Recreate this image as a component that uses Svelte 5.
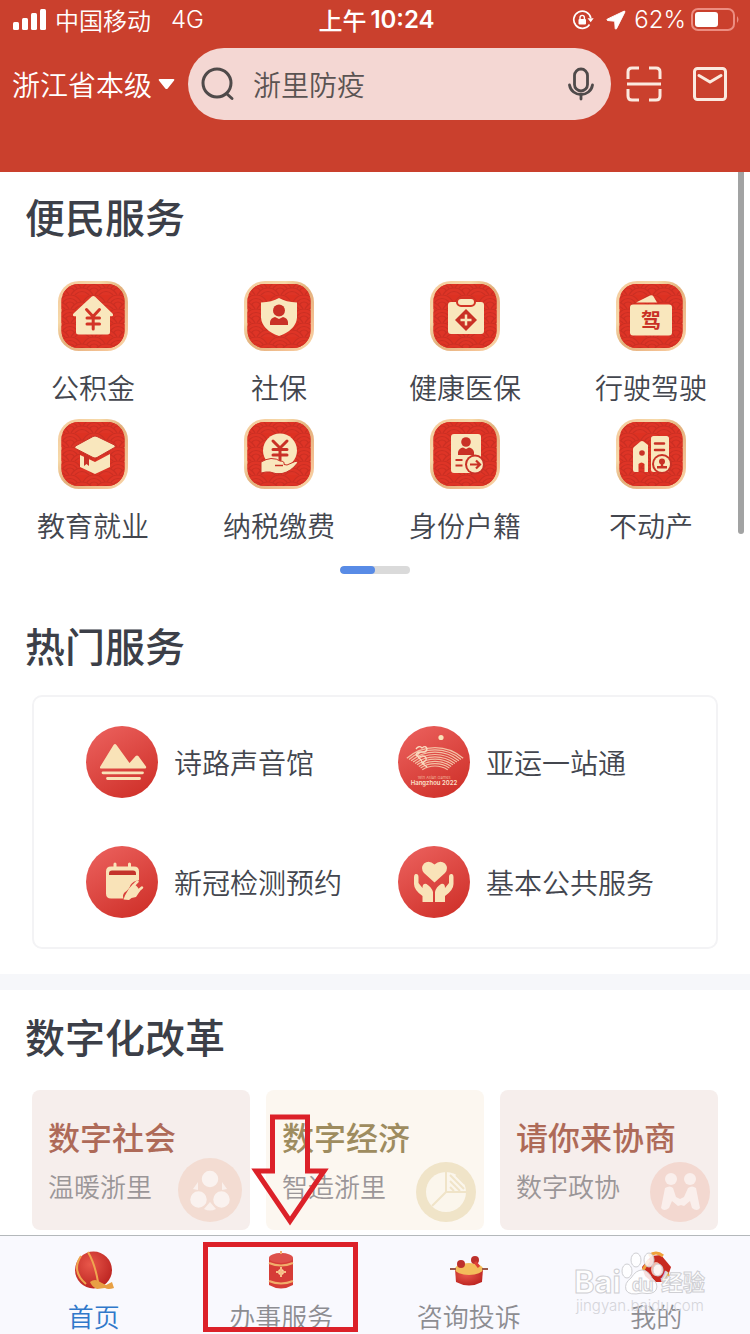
<script>
  const services = [
    { id: 'fund', label: '公积金' },
    { id: 'social', label: '社保' },
    { id: 'health', label: '健康医保' },
    { id: 'drive', label: '行驶驾驶' },
    { id: 'edu', label: '教育就业' },
    { id: 'tax', label: '纳税缴费' },
    { id: 'identity', label: '身份户籍' },
    { id: 'estate', label: '不动产' }
  ];

  const hot = [
    { id: 'poem', label: '诗路声音馆' },
    { id: 'games', label: '亚运一站通' },
    { id: 'test', label: '新冠检测预约' },
    { id: 'public', label: '基本公共服务' }
  ];

  const reforms = [
    { id: 'society', title: '数字社会', note: '温暖浙里' },
    { id: 'economy', title: '数字经济', note: '智造浙里' },
    { id: 'consult', title: '请你来协商', note: '数字政协' }
  ];

  const tabs = [
    { id: 'home', label: '首页' },
    { id: 'affairs', label: '办事服务' },
    { id: 'ask', label: '咨询投诉' },
    { id: 'mine', label: '我的' }
  ];

  let active = $state('home');
  let keyword = $state('浙里防疫');

  // Concentric arcs of the fan emblem, from the inner radius outwards.
  const fan = Array.from({ length: 9 }, (_, i) => {
    const r = 24 + i * 2.3;
    const a = ((32 + i * 1.2) * Math.PI) / 180;
    const dx = r * Math.sin(a);
    const y = 64 - r * Math.cos(a);
    return `M${37 - dx} ${y}A${r} ${r} 0 0 1 ${37 + dx} ${y}`;
  });
</script>

<svg class="defs" width="0" height="0" aria-hidden="true">
  <defs>
    <linearGradient id="gold" x1="0" y1="0" x2="1" y2="1">
      <stop offset="0" stop-color="#f3c79a" />
      <stop offset="0.3" stop-color="#f6d9a8" />
      <stop offset="0.5" stop-color="#e2b07c" />
      <stop offset="0.8" stop-color="#f4c193" />
      <stop offset="1" stop-color="#f8dcae" />
    </linearGradient>
    <linearGradient id="disc" x1="0.2" y1="0" x2="0.8" y2="1">
      <stop offset="0" stop-color="#ea5f5b" />
      <stop offset="1" stop-color="#cf3029" />
    </linearGradient>
    <radialGradient id="ball" cx="0.4" cy="0.35" r="0.7">
      <stop offset="0" stop-color="#e8574a" />
      <stop offset="1" stop-color="#bb2320" />
    </radialGradient>
    <pattern id="wave" width="24" height="14" patternUnits="userSpaceOnUse">
      <g fill="#de3426" stroke="#cb2e22" stroke-width="1.200">
        <circle cx="12" cy="12" r="12" /><circle cx="12" cy="12" r="8.500" /><circle cx="12" cy="12" r="5" />
        <circle cx="0" cy="19" r="12" /><circle cx="0" cy="19" r="8.500" />
        <circle cx="24" cy="19" r="12" /><circle cx="24" cy="19" r="8.500" />
      </g>
    </pattern>
  </defs>
</svg>

<div class="app">
  <header>
    <div class="status">
      <div class="carrier">
        <svg width="34" height="22" viewBox="0 0 34 22" fill="#fff" aria-hidden="true">
          <rect x="0" y="13" width="6" height="8" rx="1.5" /><rect x="9" y="9" width="6" height="12" rx="1.5" />
          <rect x="18" y="4" width="6" height="17" rx="1.5" /><rect x="27" y="0" width="6" height="21" rx="1.5" />
        </svg>
        <span>中国移动</span><span class="net">4G</span>
      </div>
      <div class="time"><span>上午</span><b>10:24</b></div>
      <div class="power">
        <svg width="22" height="20" viewBox="0 0 22 20" fill="none" stroke="#fff" stroke-width="1.7" aria-hidden="true">
          <path d="M17.5 14.5A8.6 8.6 0 1 1 18.8 8" />
          <path d="M15.5 8.2h6.2l-3 4z" fill="#fff" stroke="none" />
          <rect x="6.5" y="9" width="7.5" height="5.5" rx="1" fill="#fff" stroke="none" />
          <path d="M8 9.5V7.6a2.2 2.2 0 0 1 4.4 0v1.9" stroke-width="1.4" />
        </svg>
        <svg class="locate" width="20" height="20" viewBox="0 0 20 20" fill="#fff" aria-hidden="true">
          <path d="M18 1.200 1.200 9.200q-.8.8.3 1.300l7.200.7.500 7.300q.5 1.200 1.300.2L18.900 2q.2-1.200-.9-.8z" stroke="#fff" />
        </svg>
        <span>62%</span>
        <svg width="50" height="24" viewBox="0 0 50 24" fill="none" aria-hidden="true">
          <rect x="2" y="1" width="42" height="21" rx="6" stroke="#ec8d81" stroke-width="2" />
          <rect x="5" y="4" width="23" height="15" rx="3" fill="#fff" />
          <path d="M47 8q3 3.500 0 7z" fill="#ec8d81" />
        </svg>
      </div>
    </div>
    <div class="bar">
      <button class="region">
        浙江省本级
        <svg width="18" height="12" viewBox="0 0 18 12" aria-hidden="true"><path d="M1.500 1h14q1.500.2.6 1.500l-6.400 8q-1.200 1-2.400 0l-6.400-8q-.8-1.300.6-1.500z" fill="#fff" /></svg>
      </button>
      <div class="search">
        <svg width="34" height="34" viewBox="0 0 34 34" fill="none" stroke="#4f4a4a" stroke-width="3" stroke-linecap="round" aria-hidden="true">
          <circle cx="16" cy="16" r="14" /><path d="m26 27 5 4.500" />
        </svg>
        <input type="text" aria-label="搜索" bind:value={keyword} />
        <button class="icon" aria-label="语音">
          <svg width="28" height="34" viewBox="0 0 28 34" fill="none" stroke="#4f4a4a" stroke-width="2.800" stroke-linecap="round">
            <rect x="7.500" y="2" width="13" height="22" rx="6.500" /><path d="M2.500 18c1 6 6 9.500 11.500 9.500S24.500 24 25.500 18M14 28v4" />
          </svg>
        </button>
      </div>
      <button class="icon" aria-label="扫一扫">
        <svg width="36" height="36" viewBox="0 0 36 36" fill="none" stroke="#fbe9df" stroke-width="3">
          <path d="M2 13V6q0-4 4-4h7M23 2h7q4 0 4 4v7M2 23v7q0 4 4 4h7M23 34h7q4 0 4-4v-7M1 18h34" />
        </svg>
      </button>
      <button class="icon" aria-label="消息">
        <svg width="36" height="36" viewBox="0 0 36 36" fill="none" stroke="#fbe9df" stroke-width="3">
          <rect x="2.500" y="2.500" width="31" height="31" rx="3" /><path d="m7 9.500 11 6.500 11-6.500" stroke-linecap="round" />
        </svg>
      </button>
    </div>
  </header>

  <main>
    <section class="convenience">
      <h2>便民服务</h2>
      <div class="grid">
        {#each services as s}
          <button class="service">
            <svg width="70" height="70" viewBox="0 0 70 70" fill="#f9e7bd" aria-hidden="true">
              <rect x="0" y="0" width="70" height="70" rx="21" fill="url(#gold)" />
              <rect x="3.500" y="3" width="63" height="64" rx="17" fill="#dd3122" />
              <rect x="3.500" y="3" width="63" height="64" rx="17" fill="url(#wave)" />
              {#if s.id === 'fund'}
                <path d="M33.500 15.800q1.800-1.500 3.600 0L54.500 32.500q1.500 2.500-.8 2.700H52V51q0 2.500-2.500 2.500h-29Q18 53.500 18 51V35.200h-1.700q-2.300-.2-.8-2.700z" />
                <path d="m28.500 28.500 6.500 7 6.500-7M29 37h12.500M29 43h12.500M35.200 36v12" fill="none" stroke="#d33426" stroke-width="3" stroke-linecap="round" />
              {:else if s.id === 'social'}
                <path d="M35 17q7 4 18 4.500v15Q52 49 35 55 18 49 17 36.500v-15Q28 21 35 17z" />
                <g fill="#c93126"><circle cx="35" cy="29.500" r="6" /><path d="M26 44v-3q.5-4 5-5l4 2 4-2q4.500 1 5 5v3z" /></g>
              {:else if s.id === 'health'}
                <rect x="18" y="21" width="36" height="32" rx="3" />
                <rect x="27" y="17" width="18" height="8" rx="4" stroke="#d33426" stroke-width="2" />
                <path d="m36 28 11 11-11 11-11-11z" fill="#c93126" /><path d="M36 33.500v11M30.500 39h11" stroke="#f9e7bd" stroke-width="2.500" />
              {:else if s.id === 'drive'}
                <path d="M20 21.500 34 14.500q2.500-.8 3.500 1l3.500 6z" />
                <rect x="14" y="23.500" width="42" height="31" rx="3" />
                <text x="35" y="46.500" class="glyph">驾</text>
              {:else if s.id === 'edu'}
                <path d="M22 36v12l15 7 15-7V35l-15 8z" />
                <path d="M17.500 29.500q-1.500-1.300 0-2.500l17.500-9.500q2-1 4 0l17.500 8.500q1.500 1.200 0 2.500L39 38.500q-2 1-4 0z" stroke="#c93126" stroke-width="1" />
                <path d="M26 36v11l2.500-2 2.500 2v-9z" fill="#c93126" />
              {:else if s.id === 'tax'}
                <circle cx="36" cy="31.500" r="17" />
                <path d="m29 22 7 7 7-7M29 30.500h14M29 36h14M36 29v12" fill="none" stroke="#c93126" stroke-width="3" stroke-linecap="round" />
                <path d="M17 43q5-3 10-3.500 6 0 9 2.500 5 0 4 3.500l3 .5 8-3.500q3.500-.5 2 2-6 8-15 10-6 1-12-1.500-4-.5-9 1z" stroke="#c93126" stroke-width="1" />
                <path d="M31 46.500h8" stroke="#c93126" stroke-width="1.500" />
              {:else if s.id === 'identity'}
                <rect x="21" y="15" width="30" height="39" rx="3" />
                <g fill="#c93126"><circle cx="36" cy="23" r="4.800" /><path d="M28 36v-3q1-4 5-4.500l3 1.500 3-1.500q4 .5 5 4.500v3z" /><circle cx="45" cy="45.500" r="10" /></g>
                <circle cx="45" cy="45.500" r="8" />
                <path d="M25.500 41h7M25.500 46.500h7M40 45.500h9M46 41.500l4 4-4 4" fill="none" stroke="#c93126" stroke-width="2.200" />
              {:else}
                <path d="M17 30q0-1 1-2l6.500-5.500q1.500-1 3 0L32 26v27h-3.500V45q-3-3-6 0v8H19q-2 0-2-2z" />
                <circle cx="26" cy="34" r="2.800" fill="#c93126" />
                <rect x="35" y="17" width="18" height="36" rx="2.500" />
                <path d="M39 24.500h9M39 31h9" stroke="#c93126" stroke-width="2.500" stroke-linecap="round" />
                <circle cx="46" cy="45" r="10" fill="#c93126" /><circle cx="46" cy="45" r="8" />
                <g fill="#c93126"><circle cx="46" cy="42.500" r="3" /><path d="M44.800 44h2.400v3H51v2.500H41V47h3.800z" /></g>
              {/if}
            </svg>
            <span>{s.label}</span>
          </button>
        {/each}
      </div>
      <div class="pager"><span></span></div>
      <span class="thumb"></span>
    </section>

    <section class="popular">
      <h2>热门服务</h2>
      <div class="panel">
        {#each hot as h}
          <button class="entry">
            <svg width="72" height="72" viewBox="0 0 72 72" fill="#f9e3b8" aria-hidden="true">
              <circle cx="36" cy="36" r="36" fill="url(#disc)" />
              {#if h.id === 'poem'}
                <path d="M14.500 42.500q-1-.8-.2-2L27.500 19q1.500-2 3 0L43.500 37l6.200-7q1.300-1.200 2.600 0L60 40.500q.7 1.300-.7 2z" />
                <path d="M17 46.800h39.500M21.500 52.500h32" stroke="#f9e3b8" stroke-width="2.800" stroke-linecap="round" />
              {:else if h.id === 'games'}
                <circle cx="43" cy="11.500" r="2.600" />
                <g fill="none" stroke="#f4c0a4" stroke-width="1.200">{#each fan as d}<path {d} />{/each}</g>
                <path d="M18 23q3-4 6-1 4-3 5 1-1 4-5 3-5-1-6 3 2 3 6 1 5 0 4 4l-4 4M22 26q-4 3-1 6 3 2 3 5l5 4" fill="none" stroke="#f9dcc0" stroke-width="1.300" />
                <text x="36" y="53" class="tiny">19th Asian Games</text>
                <text x="36" y="59" class="city">Hangzhou 2022</text>
              {:else if h.id === 'test'}
                <path d="M25 20.500h23q5 0 5 5V34q-6 1-8.500 5-1.500 5-6 7.500-2.500 3-1 6H25q-5 0-5-5v-22q0-5 5-5z" />
                <path d="M29 18v4M43.500 18v4" stroke="#f9e3b8" stroke-width="3" stroke-linecap="round" />
                <path d="M23 29v-1.500q0-3 3-3h21q3 0 3 3V29z" fill="#c4332b" />
                <path d="m43 42.500 4-4.500q4 1 7 7l-4 6-4.500 1-2.500 2-5.500-.5 1.500-4z" />
                <path d="m48 39 3.500-3.500M52 45l4-3.500" stroke="#f9e3b8" stroke-width="2.500" stroke-linecap="round" />
              {:else}
                <path d="M36.500 36.500 26 27q-4-5 0-9.500 5-4 10.500 1 5.500-5 10.500-1 4 4.500 0 9.500z" />
                <path d="M17.500 28q3-.5 3 3v6l4 5q0-5 4-4 5 3 6.500 8V56H24.500v-6Q16 44 16 38v-7q0-2.500 1.500-3z" />
                <path d="M54 28q-3-.5-3 3v6l-4 5q0-5-4-4-5 3-6 8V56h10v-6q8.500-6 8.500-12v-7q0-2.500-1.500-3z" />
              {/if}
            </svg>
            <span>{h.label}</span>
          </button>
        {/each}
      </div>
    </section>

    <section class="reform">
      <h2>数字化改革</h2>
      <div class="cards">
        {#each reforms as r}
          <a class="card {r.id}" href="#{r.id}">
            <strong>{r.title}</strong>
            <div class="foot">
              <span>{r.note}</span>
              {#if r.id === 'society'}
                <svg width="64" height="64" viewBox="0 0 64 64" aria-hidden="true">
                  <circle cx="32" cy="32" r="32" fill="#f3dcd2" />
                  <path d="m20 24-5 7 5 1zM44 24l5 7-5 1zM32 44l6 7q-6 3-12 0z" fill="#faf0ec" />
                  <g fill="#faf2ef" stroke="#f3dcd2" stroke-width="1.500"><circle cx="32" cy="21" r="9" /><circle cx="20.500" cy="41.500" r="9" /><circle cx="43.500" cy="41.500" r="9" /></g>
                </svg>
              {:else if r.id === 'economy'}
                <svg width="60" height="60" viewBox="0 0 60 60" aria-hidden="true">
                  <circle cx="30" cy="30" r="30" fill="#f0e4c8" /><circle cx="30" cy="30" r="20" fill="#fbf6ec" />
                  <path d="M30 10v20h20M30 30 16 44M34 13l14 14M34 19l10 10M34 25l4 4M40 13l9 9" fill="none" stroke="#f0e4c8" stroke-width="2" />
                </svg>
              {:else}
                <svg width="60" height="60" viewBox="0 0 60 60" aria-hidden="true">
                  <circle cx="30" cy="30" r="30" fill="#f3d8d0" />
                  <g fill="#faefec"><circle cx="21" cy="17" r="6" /><circle cx="40" cy="17" r="6" />
                    <path d="M15 26q5-3 8 0l3 9 4 2 4-2 4-9q4-3 8 0l4 20q-3 4-8 0l-2-7-6 5-3-1-3 1-6-5-3 7q-5 4-8 0z" /></g>
                </svg>
              {/if}
            </div>
          </a>
        {/each}
      </div>
    </section>
  </main>

  <nav>
    {#each tabs as t}
      <button class="tab" class:active={active === t.id} onclick={() => (active = t.id)}>
        <svg width="44" height="40" viewBox="0 0 44 40" aria-hidden="true">
          {#if t.id === 'home'}
            <circle cx="21.500" cy="20" r="18.500" fill="url(#ball)" />
            <path d="M16 2q7 12 10 30M9 6Q-1 21 14 34" fill="none" stroke="#efa650" stroke-width="2" />
            <path d="M18 32q5-4 10 0l6 3 6-3 2 6q-6 2-9 0l-8 1q-5-2-7-7z" fill="#e8a044" />
          {:else if t.id === 'affairs'}
            <path d="M10 8q12-9 24 0v27q-12 7-24 0z" fill="#d63c37" />
            <ellipse cx="22" cy="8" rx="12" ry="5" fill="#dd504b" />
            <path d="M10 13q12 5 24 0M10 31q12 5 24 0M22 1v3" fill="none" stroke="#f1ae6b" stroke-width="2" />
            <circle cx="22" cy="22" r="3" fill="#fbd3a2" />
            <path d="M22 17v10M17 22h10" stroke="#f6bd86" stroke-width="2" />
          {:else if t.id === 'ask'}
            <path d="M8 19h28l-1 13q-13 7-26 0z" fill="url(#ball)" />
            <ellipse cx="22" cy="19" rx="14" ry="6" fill="#f3bd5b" />
            <path d="M3 19h6M35 19h6" stroke="#9b5a4a" stroke-width="2" />
            <circle cx="14" cy="14" r="4" fill="#bd302b" /><circle cx="28" cy="10" r="4" fill="#bd302b" /><path d="m28 12 4 5" stroke="#dc4035" stroke-width="3" />
          {:else}
            <path d="m8 17 9-11 10-1 10 12-3 9-6 6H18l-7-6z" fill="#c8291f" />
            <path d="M15 6q7-6 14 0M9 20l6-10M35 24l-7 8" fill="none" stroke="#efa23c" stroke-width="3" />
            <ellipse cx="22" cy="19" rx="5" ry="7" fill="#f2b9ac" />
          {/if}
        </svg>
        <span>{t.label}</span>
        {#if t.id === 'affairs'}
          <i class="frame"></i>
          <svg class="arrow" width="80" height="116" viewBox="0 0 80 116" fill="none" stroke="#dc2129" stroke-width="5" aria-hidden="true">
            <path d="M22.500 3h35v54H74L40 107 6 57h16.500z" />
          </svg>
        {:else if t.id === 'mine'}
          <svg class="mark" width="140" height="72" viewBox="0 0 140 72" aria-hidden="true">
            <g fill="#fff" fill-opacity="0.850" stroke="#cfcfd3">
              <ellipse cx="54" cy="25" rx="5" ry="7" /><ellipse cx="63" cy="14" rx="5" ry="7" /><ellipse cx="76" cy="14" rx="5" ry="7" /><ellipse cx="85" cy="24" rx="5" ry="6" />
              <path d="M69 24q6 0 10 8 7 6 4 12-3 5-14 3-13 3-16-3-2-7 5-12 5-8 11-8z" />
            </g>
            <text x="1" y="47" class="brand">Bai</text>
            <text x="59" y="45" class="du">du</text>
            <text x="88" y="44" class="exp">经验</text>
            <text x="3" y="65" class="site">jingyan.baidu.com</text>
          </svg>
        {/if}
      </button>
    {/each}
  </nav>
</div>

<style>
  :global(body) { margin: 0; background: #fff; }
  .defs { position: absolute; }
  .app {
    display: flex;
    flex-direction: column;
    min-height: 100vh;
    overflow: hidden;
    color: #43464e;
    font-family: 'Noto Sans CJK SC', sans-serif;
    font-size: 28px;
    font-weight: 350;
  }
  svg { display: block; flex: none; }
  button {
    border: 0;
    padding: 0;
    background: none;
    color: inherit;
    font: inherit;
    cursor: pointer;
  }

  header { background: #ca402d; padding-bottom: 52px; color: #fff; }
  .status {
    display: grid;
    grid-template-columns: 1fr auto 1fr;
    align-items: center;
    height: 40px;
    padding: 0 10px 0 13px;
    font-size: 24px;
    line-height: 40px;
  }
  .carrier, .power, .time { display: flex; align-items: center; }
  .carrier { gap: 8px; }
  .net, .power, .time b { font-family: Inter, sans-serif; }
  .net { margin-left: 12px; }
  .time { gap: 4px; font-weight: 500; }
  .time b { font-weight: 600; }
  .power { justify-content: flex-end; gap: 4px; }
  .locate { margin: 0 4px 0 8px; }
  .bar { display: flex; align-items: center; height: 80px; padding: 8px 22px 0 12px; box-sizing: border-box; }
  .region { display: flex; align-items: center; gap: 6px; line-height: 40px; margin-right: 12px; }
  .search {
    display: flex;
    flex: 1;
    align-items: center;
    gap: 18px;
    min-width: 0;
    height: 72px;
    box-sizing: border-box;
    margin-right: 15px;
    padding: 0 16px 0 13px;
    border-radius: 36px;
    background: #f4d7d3;
    color: #5a5352;
  }
  input {
    flex: 1;
    min-width: 0;
    height: 40px;
    border: 0;
    padding: 0;
    outline: 0;
    background: none;
    color: inherit;
    font: inherit;
    line-height: 40px;
  }
  .bar > .icon + .icon { margin-left: 30px; }

  h2 { margin: 0; font-size: 40px; line-height: 56px; font-weight: 500; color: #3c3f48; }
  section { position: relative; }
  .convenience { padding-top: 16px; }
  .convenience h2, .popular h2, .reform h2 { padding-left: 25px; }
  .grid {
    display: grid;
    grid-template-columns: repeat(4, 1fr);
    row-gap: 12px;
    margin: 37px 6px 0 0;
  }
  .service { display: flex; flex-direction: column; align-items: center; gap: 16px; line-height: 40px; }
  .pager { width: 70px; height: 8px; margin: 21px auto 0; border-radius: 4px; background: #dadada; overflow: hidden; }
  .pager span { display: block; width: 50%; height: 100%; border-radius: 4px; background: #588be6; }
  .thumb { position: absolute; top: 0; right: 6px; width: 6px; height: 362px; border-radius: 0 0 3px 3px; background: #a2a3a3; }

  .popular { padding: 43px 0 25px; border-bottom: 16px solid #f6f7fa; }
  .panel {
    display: grid;
    grid-template-columns: 1fr 1fr;
    row-gap: 48px;
    margin: 22px 32px 0;
    padding: 29px 6px 29px 52px;
    border: 2px solid #f3f3f5;
    border-radius: 10px;
  }
  .entry { display: flex; align-items: center; gap: 16px; line-height: 40px; white-space: nowrap; }

  .reform { padding: 18px 0 5px; }
  .cards { display: grid; grid-template-columns: repeat(3, 1fr); gap: 16px; margin: 26px 32px 0; }
  .card { display: block; padding: 24px 8px 8px 16px; border-radius: 8px; background: #f6eeec; color: #ae6a58; text-decoration: none; }
  .card strong { display: block; font-size: 32px; line-height: 44px; font-weight: 500; white-space: nowrap; }
  .economy { background: #fcf7f0; color: #9e8c5f; }
  .foot { display: flex; justify-content: space-between; align-items: flex-end; height: 64px; }
  .foot span { align-self: flex-start; margin-top: 8px; font-size: 26px; line-height: 40px; color: #9b9698; }

  nav { display: grid; grid-template-columns: repeat(4, 1fr); margin-top: auto; border-top: 1px solid #b4b8bb; background: #f9f9fe; }
  .tab {
    position: relative;
    display: flex;
    flex-direction: column;
    align-items: center;
    gap: 10px;
    padding: 14px 0 2px;
    color: #8d8d92;
    font-size: 26px;
    line-height: 32px;
  }
  .active { color: #3078ca; }
  .frame { position: absolute; top: 6px; left: 15px; width: 155px; height: 90px; box-sizing: border-box; border: 5px solid #dc2129; }
  .arrow { position: absolute; bottom: 104px; left: 62px; z-index: 1; }
  .mark { position: absolute; top: 10px; left: 10px; }

  text { font-family: Inter, 'Noto Sans CJK SC', sans-serif; }
  .glyph { font-size: 20px; font-weight: 700; text-anchor: middle; fill: #c93126; }
  .tiny { font-size: 4px; text-anchor: middle; fill: #f6c9ae; }
  .city { font-size: 6px; font-weight: 600; text-anchor: middle; fill: #fbe0cc; }
  .brand, .du, .exp { fill: #fff; fill-opacity: 0.85; stroke: #cfcfd3; stroke-width: 1; font-weight: 700; }
  .brand { font-size: 31px; }
  .du { font-size: 17px; }
  .exp { font-size: 22px; }
  .site { font-size: 15px; fill: #d5d5da; }
</style>
